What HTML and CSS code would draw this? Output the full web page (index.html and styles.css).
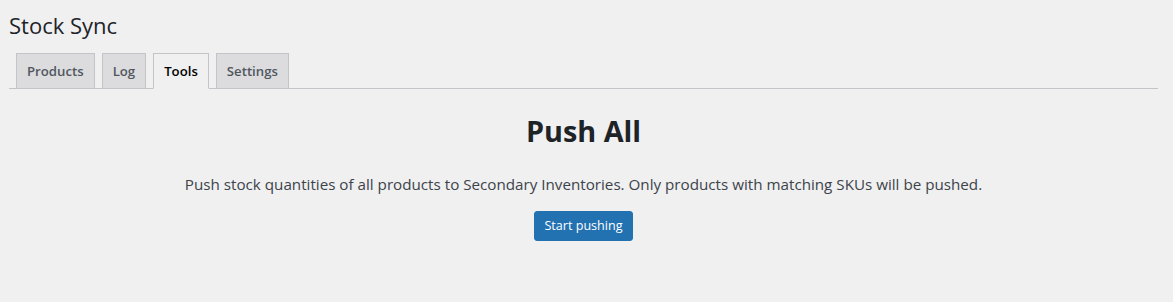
FILE: index.html
```html
<!DOCTYPE html>
<html lang="en">
<head>
<meta charset="utf-8">
<title>Stock Sync</title>
<link rel="stylesheet" href="styles.css">
</head>
<body>
<div class="wrap">
  <h1 class="page-title">Stock Sync</h1>
  <nav class="tabs">
    <a class="tab" href="#">Products</a>
    <a class="tab" href="#">Log</a>
    <a class="tab active" href="#">Tools</a>
    <a class="tab" href="#">Settings</a>
  </nav>
  <section class="tool">
    <h2 class="tool-title">Push All</h2>
    <p class="tool-desc">Push stock quantities of all products to Secondary Inventories. Only products with matching SKUs will be pushed.</p>
    <button class="btn-primary" type="button">Start pushing</button>
  </section>
</div>
</body>
</html>
```
FILE: styles.css
```css
html, body {
  margin: 0;
  padding: 0;
  background: #f0f0f1;
  color: #3c434a;
  font-family: "Open Sans", "Noto Sans", sans-serif;
}

.wrap {
  padding: 0 15px 0 9px;
}

.page-title {
  margin: 0;
  padding: 11px 0 0;
  height: 42px;
  box-sizing: border-box;
  font-size: 22px;
  font-weight: 400;
  line-height: 29px;
  color: #1d2327;
}

.tabs {
  display: flex;
  gap: 7px;
  padding-left: 7px;
  border-bottom: 1px solid #c3c4c7;
  margin-top: 11px;
}

.tab {
  display: block;
  height: 35px;
  box-sizing: border-box;
  padding: 0 10px;
  margin-bottom: -1px;
  border: 1px solid #c3c4c7;
  border-bottom: none;
  background: #dcdcde;
  color: #50575e;
  font-size: 13.2px;
  font-weight: 600;
  line-height: 34px;
  text-decoration: none;
}

.tab.active {
  background: #f0f0f1;
  color: #000;
  height: 36px;
  border-bottom: 1px solid #f0f0f1;
}

.tool {
  display: flex;
  flex-direction: column;
  align-items: center;
}

.tool-title {
  margin: 22px 0 0;
  font-size: 28.8px;
  font-weight: 700;
  line-height: 40px;
  color: #1d2327;
}

.tool-desc {
  margin: 21px 0 0;
  font-size: 15.2px;
  line-height: 24px;
  color: #3c434a;
}

.btn-primary {
  margin-top: 15px;
  height: 30px;
  padding: 0 9px;
  border: 1px solid #2271b1;
  border-radius: 3px;
  background: #2271b1;
  color: #fff;
  font-family: inherit;
  font-size: 12.6px;
  line-height: 28px;
  cursor: pointer;
}
```
